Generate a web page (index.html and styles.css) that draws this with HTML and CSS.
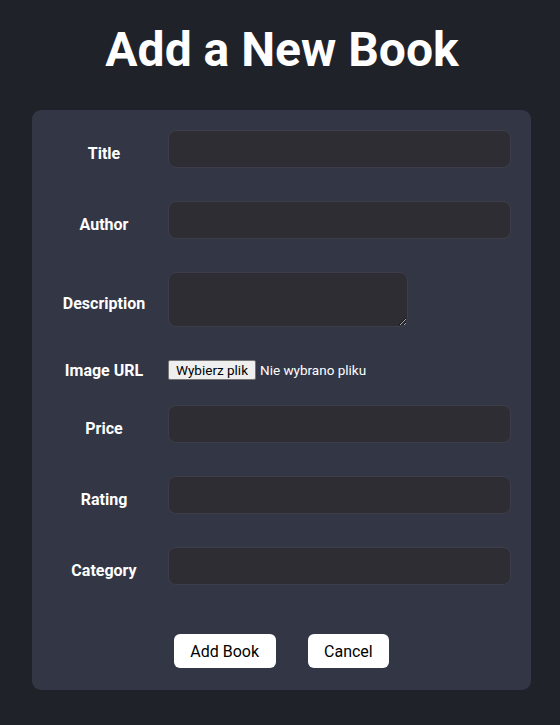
FILE: index.html
```html
<!DOCTYPE html>
<html lang="pl">
<head>
<meta charset="utf-8">
<title>Add a New Book</title>
<link rel="stylesheet" href="styles.css">
</head>
<body>
<h1 class="page-title">Add a New Book</h1>
<form class="card">
  <div class="row">
    <label class="label" for="title">Title</label>
    <input class="field" id="title" type="text">
  </div>
  <div class="row">
    <label class="label" for="author">Author</label>
    <input class="field" id="author" type="text">
  </div>
  <div class="row">
    <label class="label" for="desc">Description</label>
    <textarea class="field area" id="desc"></textarea>
  </div>
  <div class="row">
    <span class="label">Image URL</span>
    <div class="file">
      <span class="file-btn">Wybierz plik</span>
      <span class="file-text">Nie wybrano pliku</span>
    </div>
  </div>
  <div class="row">
    <label class="label" for="price">Price</label>
    <input class="field" id="price" type="text">
  </div>
  <div class="row">
    <label class="label" for="rating">Rating</label>
    <input class="field" id="rating" type="text">
  </div>
  <div class="row">
    <label class="label" for="category">Category</label>
    <input class="field" id="category" type="text">
  </div>
  <div class="actions">
    <button class="btn" type="button">Add Book</button>
    <button class="btn" type="button">Cancel</button>
  </div>
</form>
</body>
</html>
```

FILE: styles.css
```css
* { box-sizing: border-box; }

html, body {
  margin: 0;
  background: #202229;
  font-family: Roboto, "Liberation Sans", sans-serif;
  color: #ffffff;
}

body {
  padding-top: 21px;
}

.page-title {
  margin: 0 0 32px;
  padding-left: 4px;
  text-align: center;
  font-size: 48px;
  font-weight: 700;
  line-height: 57px;
}

.card {
  width: 499px;
  margin-left: 32px;
  background: #333645;
  border-radius: 9px;
  padding: 20px 20px 22px;
  display: flex;
  flex-direction: column;
  gap: 25px;
}

.row {
  display: flex;
  align-items: center;
  gap: 12px;
}

.label {
  width: 104px;
  flex: none;
  text-align: center;
  font-size: 16px;
  font-weight: 700;
  line-height: 19px;
}

.field {
  width: 343px;
  height: 38px;
  margin: 0 0 8px;
  background: #2e2d33;
  border: 1px solid #3d3e4a;
  border-radius: 8px;
  color: #fff;
  font: 16px Roboto, sans-serif;
  padding: 0 10px;
  outline: none;
}

.area {
  width: 240px;
  height: 55px;
  resize: vertical;
}

.file {
  display: flex;
  align-items: center;
  gap: 4px;
  height: 20px;
}

.file-btn {
  display: inline-flex;
  align-items: center;
  height: 20px;
  padding: 0 7px;
  background: #efefef;
  border: 1px solid #767676;
  border-radius: 2px;
  color: #000;
  font: 13.5px Roboto, "Liberation Sans", sans-serif;
}

.file-text {
  font-size: 13.5px;
  color: #fff;
}

.actions {
  display: flex;
  justify-content: center;
  gap: 32px;
  margin-top: 16px;
}

.btn {
  height: 34px;
  padding: 0 16.5px;
  background: #fff;
  border: none;
  border-radius: 6px;
  color: #000;
  font: 16px Roboto, sans-serif;
}
```
